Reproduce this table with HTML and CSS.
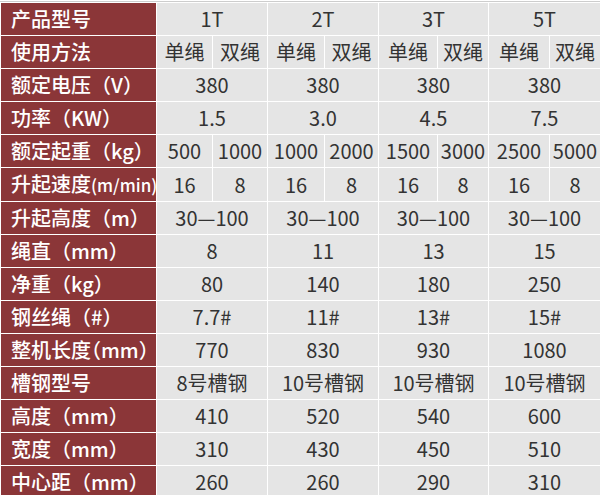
FILE: index.html
```html
<!DOCTYPE html>
<html lang="zh-CN">
<head>
<meta charset="utf-8">
<title>产品参数</title>
<link rel="stylesheet" href="styles.css">
</head>
<body>
<div class="sheet">
<table class="spec">
<colgroup>
<col class="c-label"><col class="c1a"><col class="c1b"><col class="c2a"><col class="c2b"><col class="c3a"><col class="c3b"><col class="c5a"><col class="c5b">
</colgroup>
<tbody>
<tr><th>产品型号</th><td colspan="2">1T</td><td colspan="2">2T</td><td colspan="2">3T</td><td colspan="2">5T</td></tr>
<tr><th>使用方法</th><td>单绳</td><td>双绳</td><td>单绳</td><td>双绳</td><td>单绳</td><td>双绳</td><td>单绳</td><td>双绳</td></tr>
<tr><th>额定电压（V）</th><td colspan="2">380</td><td colspan="2">380</td><td colspan="2">380</td><td colspan="2">380</td></tr>
<tr><th>功率（KW）</th><td colspan="2">1.5</td><td colspan="2">3.0</td><td colspan="2">4.5</td><td colspan="2">7.5</td></tr>
<tr><th>额定起重（kg）</th><td>500</td><td>1000</td><td>1000</td><td>2000</td><td>1500</td><td>3000</td><td>2500</td><td>5000</td></tr>
<tr><th>升起速度<span class="small">(m/min)</span></th><td>16</td><td>8</td><td>16</td><td>8</td><td>16</td><td>8</td><td>16</td><td>8</td></tr>
<tr><th>升起高度（m）</th><td colspan="2">30—100</td><td colspan="2">30—100</td><td colspan="2">30—100</td><td colspan="2">30—100</td></tr>
<tr><th>绳直（mm）</th><td colspan="2">8</td><td colspan="2">11</td><td colspan="2">13</td><td colspan="2">15</td></tr>
<tr><th>净重（kg）</th><td colspan="2">80</td><td colspan="2">140</td><td colspan="2">180</td><td colspan="2">250</td></tr>
<tr><th>钢丝绳（#）</th><td colspan="2">7.7#</td><td colspan="2">11#</td><td colspan="2">13#</td><td colspan="2">15#</td></tr>
<tr><th>整机长度<span class="halt">（mm）</span></th><td colspan="2">770</td><td colspan="2">830</td><td colspan="2">930</td><td colspan="2">1080</td></tr>
<tr><th>槽钢型号</th><td colspan="2">8号槽钢</td><td colspan="2">10号槽钢</td><td colspan="2">10号槽钢</td><td colspan="2">10号槽钢</td></tr>
<tr><th>高度（mm）</th><td colspan="2">410</td><td colspan="2">520</td><td colspan="2">540</td><td colspan="2">600</td></tr>
<tr><th>宽度（mm）</th><td colspan="2">310</td><td colspan="2">430</td><td colspan="2">450</td><td colspan="2">510</td></tr>
<tr><th>中心距（mm）</th><td colspan="2">260</td><td colspan="2">260</td><td colspan="2">290</td><td colspan="2">310</td></tr>
</tbody>
</table>
</div>
</body>
</html>
```

FILE: styles.css
```css
html, body {
  margin: 0;
  padding: 0;
  background: #ffffff;
}
body {
  font-family: "Noto Sans CJK SC", "Noto Sans", sans-serif;
}
.sheet {
  width: 600px;
  margin-top: 1px;
  border-top: 1px solid #cdcdcd;
}
.spec {
  width: 600px;
  table-layout: fixed;
  border-collapse: collapse;
}
.c-label { width: 156px; }
.c1a { width: 56px; }
.c1b { width: 55px; }
.c2a { width: 57px; }
.c2b { width: 54px; }
.c3a { width: 59px; }
.c3b { width: 51px; }
.c5a { width: 61px; }
.c5b { width: 51px; }
.spec th,
.spec td {
  height: 32px;
  padding: 0;
  border: 1px solid #ffffff;
  font-size: 20px;
  line-height: 32px;
  white-space: nowrap;
  overflow: hidden;
}
.spec th {
  background: #8b3638;
  color: #ffffff;
  text-align: left;
  padding-left: 10px;
  font-weight: 500;
}
.spec td {
  background: #e5e5e5;
  color: #333333;
  text-align: center;
  font-weight: 400;
}
.small {
  font-size: 17px;
}
.halt {
  font-feature-settings: "halt";
}
```
